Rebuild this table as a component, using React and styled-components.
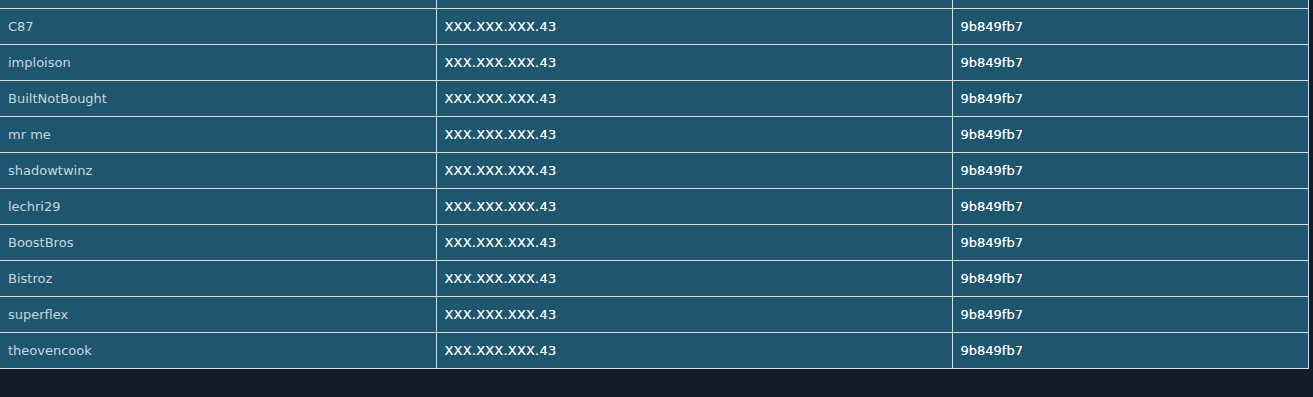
import styled, { createGlobalStyle } from "styled-components";

const GlobalStyle = createGlobalStyle`
  html, body {
    margin: 0;
    padding: 0;
    background: #111c2b;
    font-family: "DejaVu Sans", Verdana, sans-serif;
  }
`;

const Page = styled.div`
  width: 1313px;
  height: 397px;
  overflow: hidden;
  background: #111c2b;
`;

const Table = styled.table`
  width: 1308px;
  border-collapse: collapse;
  background: #1f566f;
  table-layout: fixed;
`;

const Cell = styled.td`
  height: 35px;
  padding: 0 8px;
  font-size: 13px;
  letter-spacing: ${(p) => p.$spacing || "0"};
  color: ${(p) => (p.$muted ? "#c8d5df" : "#ffffff")};
  text-shadow: ${(p) =>
    p.$muted ? "none" : "0 0 0.6px rgba(255, 255, 255, 0.7)"};
  border-top: 1px solid #dcdcdc;
  border-right: 1px solid #dcdcdc;
  border-bottom: 1px solid #dcdcdc;
  white-space: nowrap;
  vertical-align: middle;
`;

const TopCell = styled.td`
  height: 8px;
  padding: 0;
  border-right: 1px solid #dcdcdc;
`;

const rows = [
  "C87",
  "imploison",
  "BuiltNotBought",
  "mr me",
  "shadowtwinz",
  "lechri29",
  "BoostBros",
  "Bistroz",
  "superflex",
  "theovencook",
];

export default function App() {
  return (
    <Page>
      <GlobalStyle />
      <Table>
        <colgroup>
          <col style={{ width: 436 }} />
          <col style={{ width: 516 }} />
          <col style={{ width: 356 }} />
        </colgroup>
        <tbody>
          <tr>
            <TopCell />
            <TopCell />
            <TopCell />
          </tr>
          {rows.map((name) => (
            <tr key={name}>
              <Cell $muted>{name}</Cell>
              <Cell $spacing="0.2px">XXX.XXX.XXX.43</Cell>
              <Cell>9b849fb7</Cell>
            </tr>
          ))}
        </tbody>
      </Table>
    </Page>
  );
}
